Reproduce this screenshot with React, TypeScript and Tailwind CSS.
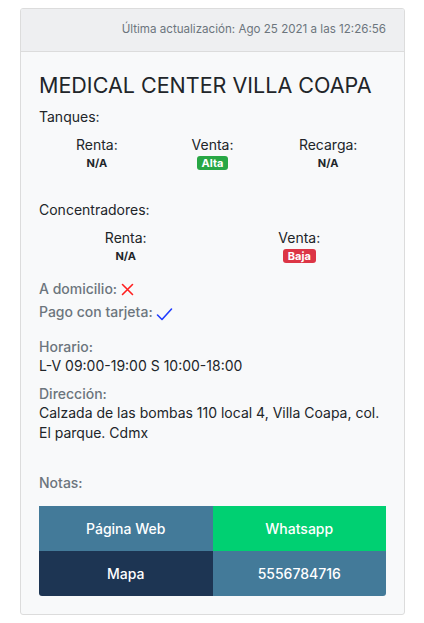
const font = { fontFamily: 'Inter, "Liberation Sans", sans-serif' }

function Badge({ label, tone }: { label: string; tone: 'green' | 'red' }) {
  const bg = tone === 'green' ? 'bg-[#28a745]' : 'bg-[#dc3545]'
  return (
    <span className={`${bg} inline-block rounded-[3px] px-[5px] text-[11px] font-bold leading-[14px] text-white`}>
      {label}
    </span>
  )
}

function Cell({ label, value }: { label: string; value: React.ReactNode }) {
  return (
    <div className="flex flex-col items-center">
      <span className="text-[14px] leading-[20px] text-[#212529]">{label}</span>
      <span className="text-[11px] font-bold leading-[16px] text-[#212529]">{value}</span>
    </div>
  )
}

export default function App() {
  return (
    <div className="min-h-[623px] bg-white pt-2" style={font}>
      <div className="ml-5 w-[385px] overflow-hidden rounded-[3px] border border-[#dcdcdc] bg-[#f8f9fa]">
        <div className="flex h-[43px] items-center justify-end border-b border-[#dcdcdc] bg-[#eeeff1] px-[18px] text-[11.6px] text-[#6c757d]">
          Última actualización: Ago 25 2021 a las 12:26:56
        </div>

        <div className="flex flex-col px-[18px] pt-[21px] pb-[18px] text-[#212529]">
          <h1 className="text-[21.5px] leading-[25px] font-normal">MEDICAL CENTER VILLA COAPA</h1>

          <div className="mt-[9px] text-[14px] leading-[20px]">Tanques:</div>
          <div className="mt-[8px] grid grid-cols-3">
            <Cell label="Renta:" value="N/A" />
            <Cell label="Venta:" value={<Badge label="Alta" tone="green" />} />
            <Cell label="Recarga:" value="N/A" />
          </div>

          <div className="mt-[29px] text-[14px] leading-[20px]">Concentradores:</div>
          <div className="mt-[8px] grid grid-cols-2">
            <Cell label="Renta:" value="N/A" />
            <Cell label="Venta:" value={<Badge label="Baja" tone="red" />} />
          </div>

          <div className="mt-[15px] flex items-center gap-[3px] text-[14px] leading-[20px] font-medium text-[#6c757d]">
            A domicilio:
            <svg width="13" height="13" viewBox="0 0 13 13" className="ml-[1px]">
              <path d="M1.5 1.5 L11.5 11.5 M11.5 1.5 L1.5 11.5" stroke="#ff1f1f" strokeWidth="1.6" strokeLinecap="round" />
            </svg>
          </div>
          <div className="mt-[3px] flex items-center gap-[3px] text-[14px] leading-[20px] font-medium text-[#6c757d]">
            Pago con tarjeta:
            <svg width="17" height="14" viewBox="0 0 17 14" className="mt-[4px]">
              <path d="M1.5 8 L6 12.5 L15.5 2" stroke="#1f3cff" strokeWidth="1.6" fill="none" strokeLinecap="round" strokeLinejoin="round" />
            </svg>
          </div>

          <div className="mt-[15px] text-[14px] leading-[19px] font-medium text-[#6c757d]">Horario:</div>
          <div className="text-[14px] leading-[20px]">L-V 09:00-19:00 S 10:00-18:00</div>

          <div className="mt-[8px] text-[14px] leading-[19px] font-medium text-[#6c757d]">Dirección:</div>
          <div className="text-[14px] leading-[20px]">
            Calzada de las bombas 110 local 4, Villa Coapa, col. El parque. Cdmx
          </div>

          <div className="mt-[30px] text-[14px] leading-[20px] font-medium text-[#6c757d]">Notas:</div>

          <div className="mt-[13px] grid grid-cols-2 overflow-hidden rounded-b-[3px] text-[14px] font-medium text-white">
            <div className="flex h-[45px] items-center justify-center bg-[#437a99]">Página Web</div>
            <div className="flex h-[45px] items-center justify-center bg-[#00d072]">Whatsapp</div>
            <div className="flex h-[45px] items-center justify-center bg-[#1d3553]">Mapa</div>
            <div className="flex h-[45px] items-center justify-center bg-[#437a99]">5556784716</div>
          </div>
        </div>
      </div>
    </div>
  )
}
